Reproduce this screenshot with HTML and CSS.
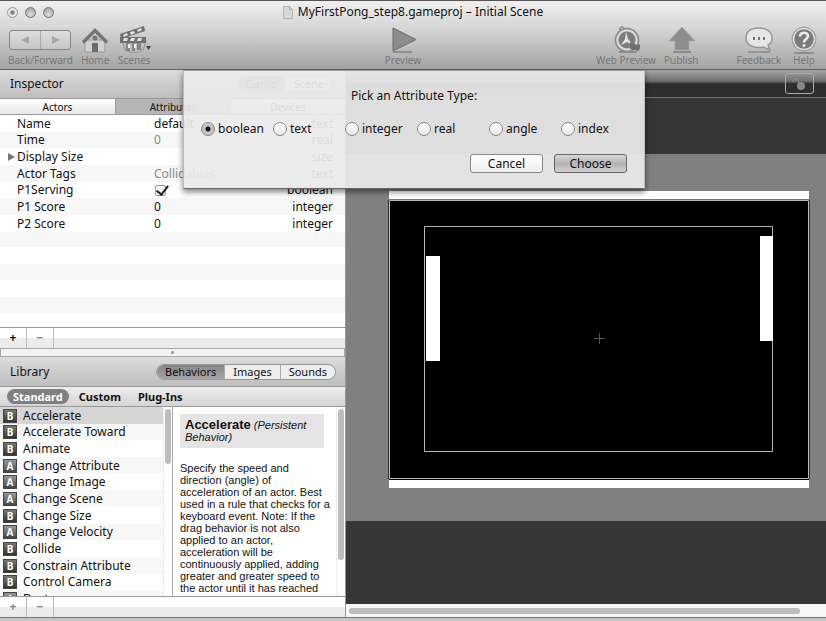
FILE: index.html
```html
<!DOCTYPE html>
<html lang="en">
<head>
<meta charset="utf-8">
<title>MyFirstPong_step8.gameproj – Initial Scene</title>
<link rel="stylesheet" href="styles.css">
</head>
<body>
<header class="chrome">
  <div class="titlebar">
    <div class="lights">
      <button class="light light-close" aria-label="Close"></button>
      <button class="light" aria-label="Minimize"></button>
      <button class="light" aria-label="Zoom"></button>
    </div>
    <h1 class="title">
      <svg width="10" height="13" viewBox="0 0 10 13" aria-hidden="true"><path d="M.5.5h6l3 3v9h-9z" fill="#d9d9d9" stroke="#b5b5b5"/><path d="M6.500.5v3h3" fill="none" stroke="#b5b5b5"/></svg>
      <span>MyFirstPong_step8.gameproj – Initial Scene</span>
    </h1>
  </div>
  <nav class="toolbar" aria-label="Toolbar">
    <div class="tool">
      <div class="history">
        <button aria-label="Back"><svg width="8" height="8" viewBox="0 0 8 8"><path d="M8 0v8L0 4z" fill="#a8a8a8"/></svg></button>
        <button aria-label="Forward"><svg width="8" height="8" viewBox="0 0 8 8"><path d="M0 0v8l8-4z" fill="#a8a8a8"/></svg></button>
      </div>
      <span>Back/Forward</span>
    </div>
    <button class="tool tool-home">
      <svg width="28" height="28" viewBox="0 0 28 28" aria-hidden="true">
        <path d="M4 14h20v12H4z" fill="#d2d2d2" stroke="#999"/>
        <path d="M14 4 3 15v3l11-11 11 11v-3z" fill="#e2e2e2"/>
        <path d="M14 2 1 15l2 3L14 7l11 11 2-3z" fill="#757575"/>
        <circle cx="14" cy="12" r="2.500" fill="#777"/>
        <path d="M11 17h6v9h-6z" fill="#6c6c6c"/>
      </svg>
      <span>Home</span>
    </button>
    <button class="tool tool-scenes">
      <svg width="34" height="28" viewBox="0 0 34 28" aria-hidden="true">
        <path d="M5 15h24l-3 9q-9 5-18 0z" fill="#bdbdbd" stroke="#939393"/>
        <path d="M9 17h4v8H9zM15 17h3v8h-3zM20 17h4v7h-4z" fill="#858585"/>
        <path d="M11 18h2v4h-2zM17 18h2v4h-2z" fill="#eee"/>
        <path d="m3 8 24-8 1 5L4 13z" fill="#6f6f6f"/>
        <path d="m6 9 4-2 1 2-4 2zM13 6l4-1 1 2-4 2zM20 4l4-2 1 2-4 2z" fill="#e2e2e2"/>
        <path d="M3 11h26v6H3z" fill="#6f6f6f"/>
        <path d="M7 12h4l-1 3H6zM14 12h4l-1 3h-4zM21 12h4l-1 3h-4z" fill="#e2e2e2"/>
        <path d="M29 20h5l-2.500 4z" fill="#444"/>
      </svg>
      <span>Scenes</span>
    </button>
    <div class="space-wide"></div>
    <button class="tool">
      <svg width="28" height="28" viewBox="0 0 28 28" aria-hidden="true">
        <path d="M4 26h19" stroke="#8d8d8d" stroke-width="2"/>
        <path d="M4 2v23l23-11.500z" fill="#8c8c8c" stroke="#6b6b6b" stroke-linejoin="round"/>
      </svg>
      <span>Preview</span>
    </button>
    <div class="space-narrow"></div>
    <button class="tool">
      <svg width="28" height="28" viewBox="0 0 28 28" aria-hidden="true">
        <path d="M7 26h18" stroke="#8f8f8f" stroke-width="2"/>
        <circle cx="10" cy="3" r="2" fill="none" stroke="#909090" stroke-width="1.500"/>
        <circle cx="15" cy="14" r="11.500" fill="#d8d8d8" stroke="#888" stroke-width="1.500"/>
        <circle cx="15" cy="14" r="8.500" fill="#7d7d7d"/>
        <path d="m14 6 2 7 5 6-6-3-6 3 4-6z" fill="#e5e5e5"/>
        <path d="m18 16 7 3 4-1-2 7-9-2z" fill="#6f6f6f"/>
      </svg>
      <span>Web Preview</span>
    </button>
    <button class="tool tool-publish">
      <svg width="28" height="28" viewBox="0 0 28 28" aria-hidden="true">
        <path d="M6 26h18" stroke="#8a8a8a" stroke-width="2"/>
        <path d="m15 1 13 14h-6v9H8v-9H2z" fill="#8d8d8d" stroke="#a5a5a5"/>
      </svg>
      <span>Publish</span>
    </button>
    <button class="tool tool-feedback">
      <svg width="28" height="28" viewBox="0 0 28 28" aria-hidden="true">
        <path d="M3 26h22" stroke="#959595" stroke-width="2"/>
        <path d="M14 2c8 0 13 4 13 10 0 4-2 6-4 7l2 5-7-3c-9 2-17-2-17-9S6 2 14 2z" fill="#e6e6e6" stroke="#969696" stroke-width="1.500"/>
        <path d="M8 11h2v3H8zM13 11h2v3h-2zM18 11h2v3h-2z" fill="#777"/>
      </svg>
      <span>Feedback</span>
    </button>
    <button class="tool tool-help">
      <svg width="28" height="28" viewBox="0 0 28 28" aria-hidden="true">
        <path d="M4 27h20" stroke="#8d8d8d" stroke-width="2"/>
        <circle cx="14" cy="13" r="12" fill="#777" stroke="#a4a4a4"/>
        <circle cx="14" cy="13" r="10.500" fill="#7b7b7b" stroke="#e0e0e0" stroke-width="1.500"/>
        <path d="M10 10.500c0-5 8-5 8-.5 0 3-4 3-4 6.500" fill="none" stroke="#eee" stroke-width="2.500"/>
        <circle cx="14" cy="19.500" r="1.600" fill="#eee"/>
      </svg>
      <span>Help</span>
    </button>
  </nav>
</header>

<main class="workspace">
  <aside class="sidebar">
    <section class="inspector">
      <div class="panel-head">
        <h2>Inspector</h2>
        <div class="segments segments-mode">
          <button class="on">Game</button><button>Scene</button>
        </div>
      </div>
      <div class="tabs">
        <button>Actors</button>
        <button class="on">Attributes</button>
        <button>Devices</button>
      </div>
      <div class="attr-area">
        <table class="attrs">
          <tr><th scope="row">Name</th><td>default</td><td>text</td></tr>
          <tr><th scope="row">Time</th><td class="dim">0</td><td>real</td></tr>
          <tr><th scope="row" class="group">Display Size</th><td></td><td>size</td></tr>
          <tr><th scope="row">Actor Tags</th><td class="dim">Collidables</td><td>text</td></tr>
          <tr><th scope="row">P1Serving</th><td><input class="check" type="checkbox" aria-label="P1Serving" checked></td><td>boolean</td></tr>
          <tr><th scope="row">P1 Score</th><td>0</td><td>integer</td></tr>
          <tr><th scope="row">P2 Score</th><td>0</td><td>integer</td></tr>
        </table>
      </div>
      <div class="add-bar">
        <button aria-label="Add attribute">+</button><button aria-label="Remove attribute" class="off">−</button>
      </div>
      <div class="splitter"></div>
    </section>

    <section class="library">
      <div class="panel-head panel-head-library">
        <h2>Library</h2>
        <div class="segments">
          <button class="on">Behaviors</button><button>Images</button><button>Sounds</button>
        </div>
      </div>
      <div class="filters">
        <button class="on">Standard</button>
        <button>Custom</button>
        <button>Plug-Ins</button>
      </div>
      <div class="browser">
        <div class="list-pane">
          <ul class="behaviors">
            <li class="on"><b>B</b>Accelerate</li>
            <li><b>B</b>Accelerate Toward</li>
            <li><b>B</b>Animate</li>
            <li><b class="a">A</b>Change Attribute</li>
            <li><b class="a">A</b>Change Image</li>
            <li><b class="a">A</b>Change Scene</li>
            <li><b>B</b>Change Size</li>
            <li><b class="a">A</b>Change Velocity</li>
            <li><b>B</b>Collide</li>
            <li><b>B</b>Constrain Attribute</li>
            <li><b>B</b>Control Camera</li>
            <li><b class="a">A</b>Destroy</li>
          </ul>
          <div class="track"><div class="thumb thumb-list"></div></div>
        </div>
        <div class="doc-pane">
          <article class="doc">
            <p class="doc-head"><strong>Accelerate</strong> <em>(Persistent Behavior)</em></p>
            <p>Specify the speed and direction (angle) of acceleration of an actor. Best used in a rule that checks for a keyboard event. Note: If the drag behavior is not also applied to an actor, acceleration will be continuously applied, adding greater and greater speed to the actor until it has reached</p>
          </article>
          <div class="track"><div class="thumb thumb-doc"></div></div>
        </div>
      </div>
      <div class="add-bar add-bar-library">
        <button aria-label="Add behavior" class="off">+</button><button aria-label="Remove behavior" class="off">−</button>
      </div>
    </section>
  </aside>

  <section class="stage">
    <div class="stage-bar">
      <button class="lock" aria-label="Lock scene">
        <svg width="16" height="14" viewBox="0 0 16 14"><path d="M1 5c1-4 5-4 6 1" fill="none" stroke="#888" stroke-width="1.500"/><circle cx="9" cy="9" r="4" fill="#888"/></svg>
      </button>
    </div>
    <div class="void void-top"></div>
    <div class="camera">
      <svg class="scene" width="422" height="300" viewBox="0 0 422 300" role="img" aria-label="Pong scene">
        <path d="M1 1h420v8H1zM1 290h420v8H1z" fill="#fff"/>
        <path d="M1 9h420v281H1z" fill="#000"/>
        <path d="M1.500 10.500h419v278h-419z" fill="none" stroke="#bbb"/>
        <path d="M.5 10v279M421.500 10v279" stroke="#333"/>
        <path d="M1 9.500h420" stroke="#777"/>
        <path d="M36.500 36.500h348v225h-348z" fill="none" stroke="#b5b5b5"/>
        <path d="M38 66h14v105H38zM372 46h13v105h-13z" fill="#fff"/>
        <path d="M206 148.500h11M211.500 143v11" stroke="#555"/>
      </svg>
    </div>
    <div class="void"></div>
    <div class="stage-scroll"><div class="thumb thumb-stage"></div></div>
  </section>

  <form class="sheet" role="dialog" aria-labelledby="sheet-title">
    <h2 id="sheet-title">Pick an Attribute Type:</h2>
    <div class="choices">
      <label><input type="radio" name="type" checked>boolean</label>
      <label><input type="radio" name="type">text</label>
      <label><input type="radio" name="type">integer</label>
      <label><input type="radio" name="type">real</label>
      <label><input type="radio" name="type">angle</label>
      <label><input type="radio" name="type">index</label>
    </div>
    <div class="actions">
      <button type="button">Cancel</button>
      <button type="button" class="primary">Choose</button>
    </div>
  </form>
</main>
</body>
</html>
```
FILE: styles.css
```css
* { box-sizing: border-box; }

body {
  margin: 0;
  height: 100vh;
  display: flex;
  flex-direction: column;
  overflow: hidden;
  background: #c4c4c4;
  border-top: 1px solid #555;
  color: #111;
  font: 12px/16px "Noto Sans", "Open Sans", sans-serif;
}

h1, h2, p, ul { margin: 0; padding: 0; font-size: inherit; font-weight: normal; }
button { margin: 0; padding: 0; border: 0; background: none; color: inherit; font: inherit; }
svg { display: block; flex: none; }

/* Window chrome */
.chrome {
  flex: none;
  height: 69px;
  background: linear-gradient(#f0f0f0, #d6d6d6 40%, #a4a4a4);
  border-bottom: 1px solid #606060;
}
.titlebar { display: flex; align-items: center; height: 22px; padding: 0 7px; }
.lights { display: flex; gap: 7px; }
.light {
  width: 11px;
  height: 11px;
  border: 1px solid #777;
  border-radius: 50%;
  background: radial-gradient(circle at 50% 75%, #ddd, #999);
}
.light-close { background: radial-gradient(circle, #777 1px, #e6e6e6 3px); border-color: #999; }
.title { flex: 1; display: flex; justify-content: center; align-items: center; gap: 5px; padding-right: 47px; }

.toolbar { display: flex; height: 46px; padding: 3px 8px 0; color: #777; font-size: 10px; line-height: 12px; }
.tool { display: flex; flex-direction: column; align-items: center; height: 42px; }
.tool-home { margin-left: 8px; }
.tool-scenes { margin-left: 8px; }
.tool-publish { margin-left: 8px; }
.tool-feedback { margin-left: 38px; }
.tool-help { margin-left: 9px; }
.space-wide { flex: 4; }
.space-narrow { flex: 3; }
.history {
  display: flex;
  width: 62px;
  height: 20px;
  margin: 4px 0;
  border: 1px solid #888;
  border-radius: 3px;
  background: linear-gradient(#ddd, #c6c6c6);
}
.history button { flex: 1; display: grid; place-items: center; }
.history button + button { border-left: 1px solid #aaa; }

/* Workspace */
.workspace {
  position: relative;
  flex: 1;
  min-height: 0;
  display: grid;
  grid-template-columns: 346px 1fr;
  margin-bottom: 3px;
  border-bottom: 1px solid #777;
}
.sidebar { min-height: 0; display: flex; flex-direction: column; background: #fff; border-right: 1px solid #999; }
.inspector { flex: none; }

.panel-head {
  display: flex;
  align-items: center;
  justify-content: space-between;
  height: 28px;
  padding: 0 9px 0 10px;
  background: linear-gradient(#dcdcdc, #bebebe);
}
.panel-head-library { height: 29px; }
.segments { display: flex; height: 16px; border: 1px solid #999; border-radius: 8px; overflow: hidden; background: #eee; font-size: 11px; line-height: 14px; }
.segments button { padding: 0 8px; }
.segments button + button { border-left: 1px solid #aaa; }
.segments .on { background: linear-gradient(#858585, #a5a5a5); }
.segments-mode { margin-right: 3px; }

.tabs { display: grid; grid-template-columns: repeat(3, 1fr); height: 17px; border: 1px solid #999; border-width: 1px 0; background: linear-gradient(#fff, #e8e8e8); font-size: 10px; line-height: 14px; }
.tabs .on { background: #b5b5b5; }
.tabs button + button { border-left: 1px solid #999; }

.attr-area { height: 212px; background: repeating-linear-gradient(#fff 0 17px, #f7f7f7 17px 33px); }
.attrs { width: 100%; border-collapse: collapse; table-layout: fixed; }
.attrs tr { height: 17px; }
.attrs tr:nth-child(3n + 2) { height: 16px; }
.attrs tr:nth-child(even) { background: #f7f7f7; }
.attrs tr:nth-child(odd) { background: #fff; }
.attrs th, .attrs td { padding: 0; text-align: left; font-weight: normal; white-space: nowrap; }
.attrs th { width: 154px; padding-left: 17px; }
.attrs td:last-child { text-align: right; padding-right: 12px; }
.attrs .dim { color: #888; }
.attrs .group { padding-left: 8px; }
.group::before {
  content: "";
  display: inline-block;
  margin-right: 2px;
  border-left: 7px solid #777;
  border-top: 4px solid transparent;
  border-bottom: 4px solid transparent;
}
.check {
  appearance: none;
  display: block;
  width: 11px;
  height: 11px;
  margin: 2px 1px;
  border: 1px solid #999;
  border-radius: 2px;
  background: #f3f3f3;
}
.check:checked::before {
  content: "";
  display: block;
  width: 5px;
  height: 10px;
  margin: -3px 0 0 3px;
  border: solid #222;
  border-width: 0 2px 2px 0;
  transform: rotate(38deg);
}

.add-bar { display: flex; height: 21px; border-top: 1px solid #999; background: linear-gradient(#fff 50%, #ececec 50%); line-height: 20px; }
.add-bar button { width: 27px; border-right: 1px solid #bbb; font-weight: bold; }
.add-bar .off { color: #888; }
.splitter { height: 9px; border: 1px solid #aaa; background: radial-gradient(circle, #999 1px, #f3f3f3 2px); }

.library { flex: 1; min-height: 0; display: flex; flex-direction: column; }
.library > * { flex: none; }
.filters { display: flex; align-items: center; gap: 10px; height: 21px; padding-left: 7px; border: 1px solid #999; border-width: 1px 0; background: linear-gradient(#eee, #d4d4d4); font-size: 11px; font-weight: bold; }
.filters .on { padding: 0 6px; border-radius: 8px; background: #808080; color: #fff; line-height: 15px; }
.filters button + button + button { margin-left: 7px; }

.library .browser { flex: 1; min-height: 0; display: grid; grid-template-columns: 173px 1fr; }
.list-pane, .doc-pane { min-width: 0; min-height: 0; display: flex; overflow: hidden; }
.list-pane { border-right: 1px solid #aaa; }
.behaviors { flex: 1; list-style: none; }
.behaviors li { display: flex; align-items: center; gap: 6px; height: 17px; padding-left: 3px; white-space: nowrap; }
.behaviors li:nth-child(3n + 2) { height: 16px; }
.behaviors li:nth-child(even) { background: #f7f7f7; }
.behaviors .on { background: #d6d6d6; }
.behaviors b { width: 14px; height: 14px; background: linear-gradient(#777, #333); border: 1px solid #444; color: #fff; font-size: 10px; line-height: 12px; text-align: center; }
.behaviors .a { background: linear-gradient(#999, #444); }
.track { flex: none; width: 9px; padding: 2px 1px; border-left: 1px solid #eee; }
.thumb { border-radius: 3px; background: #bdbdbd; }
.thumb-list { height: 55px; }
.thumb-doc { height: 151px; }
.doc { flex: 1; min-width: 0; padding: 7px 4px 0 7px; font: 11px/12px "Liberation Sans", Arial, sans-serif; }
.doc-head { margin: 0 8px 14px 0; padding: 5px; background: #e4e4e4; }
.doc-head strong { font-size: 13px; }

/* Stage */
.stage { min-width: 0; display: flex; flex-direction: column; background: #363636; }
.stage-bar { flex: none; display: flex; justify-content: flex-end; height: 28px; padding: 3px 12px 0 0; border-bottom: 1px solid #777; background: linear-gradient(#a4a4a4, #707070 11px, #2e2e2e 14px); }
.lock { display: grid; place-items: center; width: 29px; height: 21px; border: 1px solid #aaa; border-radius: 3px; }
.void { flex: 84; }
.void-top { flex: 56; }
.camera { flex: none; display: flex; justify-content: flex-end; padding: 36px 16px 31px 0; background: #808080; }
.stage-scroll { flex: none; height: 13px; padding: 4px 26px 3px 3px; background: #f6f6f6; }
.thumb-stage { height: 6px; }

/* Attribute type sheet */
.sheet {
  position: absolute;
  top: 0;
  left: 183px;
  width: 462px;
  height: 119px;
  padding: 17px 17px 0;
  background: rgba(235, 235, 235, 0.93);
  border: 1px solid #bbb;
  border-top-color: #999;
  border-bottom-color: #666;
  box-shadow: 0 3px 6px rgba(0, 0, 0, 0.5);
}
.sheet h2 { text-align: center; }
.choices { display: grid; grid-template-columns: repeat(6, 72px); margin-top: 17px; }
.choices label { display: flex; align-items: center; gap: 3px; }
.choices input {
  appearance: none;
  width: 14px;
  height: 14px;
  margin: 0;
  border: 1px solid #888;
  border-radius: 50%;
  background: linear-gradient(#fff, #e6e6e6);
}
.choices input:checked { background: radial-gradient(circle, #111 2px, #c4c4c4 3px); }
.actions { display: flex; justify-content: flex-end; gap: 11px; margin-top: 17px; }
.actions button { width: 73px; height: 19px; border: 1px solid #888; border-radius: 3px; background: linear-gradient(#fff, #eee); line-height: 17px; }
.actions .primary { border-color: #666; background: linear-gradient(#d8d8d8, #b4b4b4 50%, #cfcfcf); }
```
